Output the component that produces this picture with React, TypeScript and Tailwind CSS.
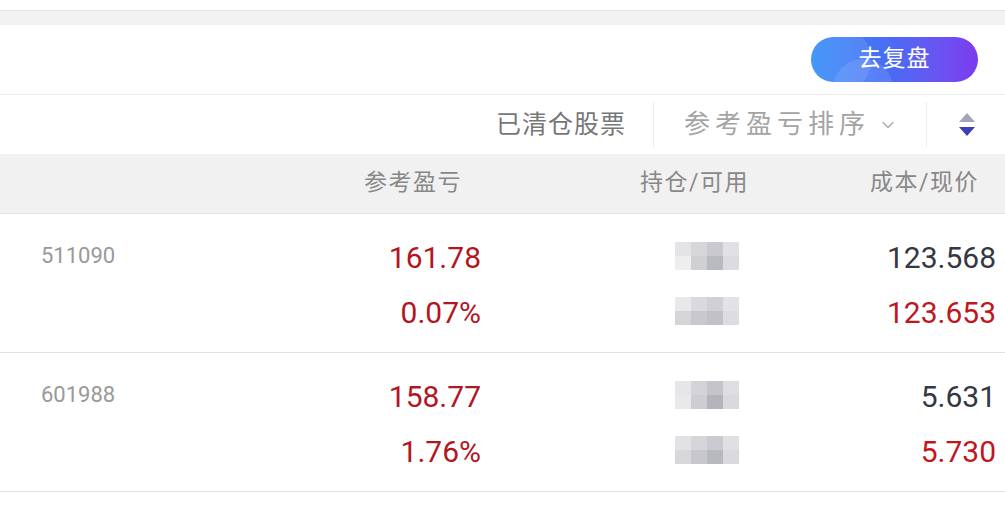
import { ChevronDown } from 'lucide-react';

const FONT = { fontFamily: 'Roboto, "Noto Sans CJK SC", sans-serif' };

interface Holding {
  code: string;
  pnl: string;
  pnlRate: string;
  cost: string;
  price: string;
}

const holdings: Holding[] = [
  { code: '511090', pnl: '161.78', pnlRate: '0.07%', cost: '123.568', price: '123.653' },
  { code: '601988', pnl: '158.77', pnlRate: '1.76%', cost: '5.631', price: '5.730' },
];

// pixelated mask that hides the position numbers
function Mosaic({ shades }: { shades: string[] }) {
  return (
    <div className="grid grid-cols-4 w-[64px] h-[28px] blur-[0.6px]">
      {shades.map((c, i) => (
        <div key={i} style={{ backgroundColor: c }} />
      ))}
    </div>
  );
}

function SortIcon() {
  return (
    <svg width="20" height="26" viewBox="0 0 20 26">
      <path d="M10 1 L18 10 L2 10 Z" fill="#9ea6b8" />
      <path d="M2 15 L18 15 L10 24 Z" fill="#3c41b9" />
    </svg>
  );
}

function HoldingRow({ item, idx }: { item: Holding; idx: number }) {
  const top = idx === 0
    ? ['#e4e4e8', '#d6d6db', '#c9c9cf', '#e1e1e5', '#eeeeef', '#cfcfd4', '#b9b9c0', '#dcdce0']
    : ['#e6e6ea', '#d3d3d8', '#c4c4ca', '#dedee2', '#e9e9ec', '#cdcdd2', '#b4b4bc', '#d9d9de'];
  const bottom = idx === 0
    ? ['#e8e8eb', '#dadade', '#d0d0d5', '#e3e3e7', '#d4d4d9', '#c8c8ce', '#c1c1c8', '#dddde1']
    : ['#e2e2e6', '#d5d5da', '#cacad0', '#e0e0e4', '#d8d8dc', '#c7c7cd', '#b8b8bf', '#dadade'];
  return (
    <div className="flex h-[139px] border-b border-[#e2e2e2]">
      <div className="w-[481px] flex justify-between pl-[41px]">
        <div className="pt-[25px] text-[22px] text-[#999]">{item.code}</div>
        <div className="flex flex-col items-end pt-[26px] gap-[19px] text-[30px] leading-[36px] text-[#b3161e]">
          <span>{item.pnl}</span>
          <span>{item.pnlRate}</span>
        </div>
      </div>
      <div className="flex-1 flex flex-col pl-[194px] pt-[28px] gap-[27px]">
        <Mosaic shades={top} />
        <Mosaic shades={bottom} />
      </div>
      <div className="flex flex-col items-end pr-[9px] pt-[26px] gap-[19px] text-[30px] leading-[36px]">
        <span className="text-[#333844]">{item.cost}</span>
        <span className="text-[#c0171f]">{item.price}</span>
      </div>
    </div>
  );
}

export default function App() {
  return (
    <div className="w-[1005px] h-[510px] bg-white overflow-hidden" style={FONT}>
      <div className="h-[10px] bg-white" />
      <div className="h-[15px] bg-[#f2f2f2] border-t border-[#e4e4e4]" />

      <div className="h-[70px] flex items-center justify-end pr-[27px] border-b border-[#ececec]">
        <button className="relative overflow-hidden w-[167px] h-[45px] rounded-full bg-linear-to-r from-[#2f8bf7] via-[#4b6af3] to-[#7b3af0] text-white text-[23px] tracking-[1px]">
          <span className="absolute -left-[10px] -top-[12px] w-[70px] h-[70px] rounded-full bg-white/10" />
          <span className="absolute left-[22px] top-[22px] w-[60px] h-[60px] rounded-full bg-white/10" />
          <span className="relative">去复盘</span>
        </button>
      </div>

      <div className="h-[59px] flex items-center justify-end pr-[28px]">
        <span className="text-[25px] text-[#777] tracking-[1px]">已清仓股票</span>
        <div className="w-px h-[45px] bg-[#ececec] ml-[27px] mr-[30px]" />
        <span className="text-[26px] text-[#a4a4a4] tracking-[5px]">参考盈亏排序</span>
        <ChevronDown className="w-[20px] h-[20px] ml-[8px] text-[#a8a8a8]" strokeWidth={1.5} />
        <div className="w-px h-[45px] bg-[#ececec] ml-[28px] mr-[30px]" />
        <SortIcon />
      </div>

      <div className="h-[60px] flex items-center bg-[#f1f1f1] border-b border-[#e4e4e4] text-[23px] text-[#888] tracking-[1.5px]">
        <div className="w-[462px] text-right">参考盈亏</div>
        <div className="ml-[178px]">持仓/可用</div>
        <div className="flex-1 text-right pr-[26px]">成本/现价</div>
      </div>

      {holdings.map((h, i) => (
        <HoldingRow key={h.code} item={h} idx={i} />
      ))}
    </div>
  );
}
